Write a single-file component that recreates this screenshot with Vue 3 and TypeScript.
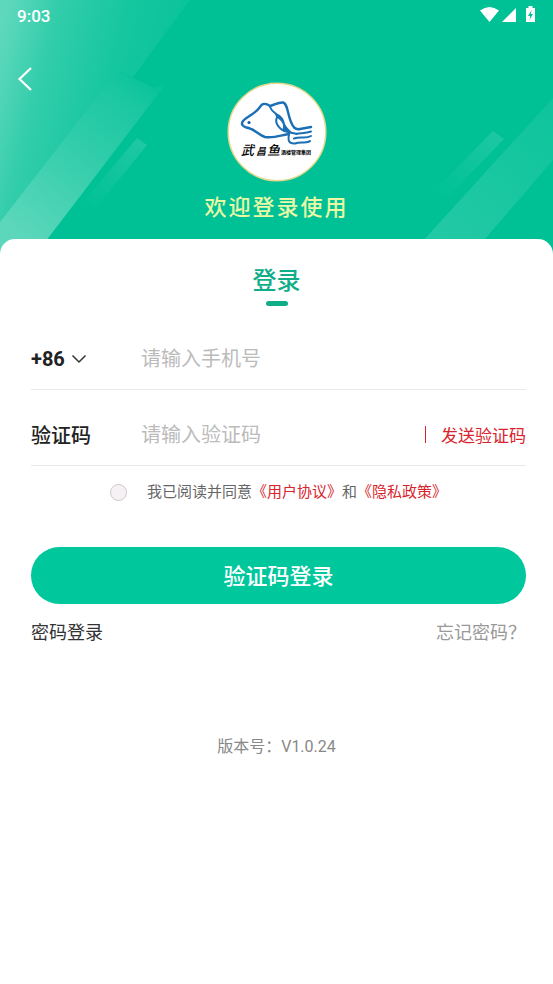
<script setup lang="ts">
import { ref } from 'vue'

const phone = ref('')
const code = ref('')
const agreed = ref(false)
</script>

<template>
  <main class="page">
    <header class="hero">
      <svg class="hero-art" viewBox="0 0 553 254" preserveAspectRatio="none" aria-hidden="true">
        <defs>
          <linearGradient id="glow" gradientUnits="userSpaceOnUse" x1="-10" y1="80" x2="175" y2="125">
            <stop offset="0" stop-color="#fff" stop-opacity=".37" />
            <stop offset=".25" stop-color="#fff" stop-opacity=".2" />
            <stop offset=".6" stop-color="#fff" stop-opacity=".09" />
            <stop offset="1" stop-color="#fff" stop-opacity=".03" />
          </linearGradient>
          <linearGradient id="beam" gradientUnits="userSpaceOnUse" x1="20" y1="235" x2="150" y2="78">
            <stop offset="0" stop-color="#fff" stop-opacity=".36" />
            <stop offset=".5" stop-color="#fff" stop-opacity=".2" />
            <stop offset=".85" stop-color="#fff" stop-opacity=".1" />
            <stop offset="1" stop-color="#fff" stop-opacity=".03" />
          </linearGradient>
          <linearGradient id="chip-left" gradientUnits="userSpaceOnUse" x1="142" y1="141" x2="88" y2="208">
            <stop offset="0" stop-color="#fff" stop-opacity=".12" />
            <stop offset="1" stop-color="#fff" stop-opacity="0" />
          </linearGradient>
          <linearGradient id="chip-right" gradientUnits="userSpaceOnUse" x1="498" y1="135" x2="440" y2="195">
            <stop offset="0" stop-color="#fff" stop-opacity=".11" />
            <stop offset="1" stop-color="#fff" stop-opacity="0" />
          </linearGradient>
          <linearGradient id="ribbon" gradientUnits="userSpaceOnUse" x1="450" y1="240" x2="560" y2="120">
            <stop offset="0" stop-color="#fff" stop-opacity=".13" />
            <stop offset="1" stop-color="#fff" stop-opacity=".06" />
          </linearGradient>
        </defs>
        <path d="M0 0H190L133 77 118 70 0 222Z" fill="url(#glow)" />
        <path d="M118 70 153 88 165 85 36 254H0V222Z" fill="url(#beam)" />
        <path d="M137 138 147 145 95 209 83 202Z" fill="url(#chip-left)" />
        <path d="M493 131 504 139 446 199 436 189Z" fill="url(#chip-right)" />
        <path d="M553 98V160L472 254H411Z" fill="url(#ribbon)" />
      </svg>

      <div class="status">
        <span>9:03</span>
        <svg class="status-icons" width="56" height="18" viewBox="0 0 56 18" fill="#fff" aria-hidden="true">
          <path d="M0 4.600Q9.500-2.600 19 4.600L9.500 16Z" />
          <path d="M22 16 36 2V16Z" />
          <path fill-rule="evenodd" d="M48.500 0H52.500V2H55V16H46V2H48.500ZM51.500 4 48 10H50.200L49.500 14 53 8H50.800Z" />
        </svg>
      </div>

      <div class="brand">
        <button class="back" type="button" aria-label="返回">
          <svg width="16" height="26" viewBox="0 0 16 26" fill="none" stroke="#fff" stroke-width="2.200">
            <path d="M14 2 2.500 13 14 24" />
          </svg>
        </button>
        <svg class="logo" width="100" height="100" viewBox="0 0 100 100">
          <circle cx="50" cy="50" r="48.800" fill="#fff" stroke="#e3d98c" stroke-width="1.500" />
          <g fill="none" stroke="#1b6fb5" stroke-linecap="round" stroke-linejoin="round">
            <path stroke-width="2.400" d="M43 24C39 21 35 21 33 25 28 32 21 34 16 39 14 42 15 44 19 45.500 27 46 31 53 38 55 46 56.500 55 53 62 52M43 24C48 23 51 20 56 20.500 61 22 60 31 64 40 66 45 68 48 73 47L84 45" />
            <path stroke-width="2" d="M43 25C45 30 49 31 51 34 47 39 50 45 57 49L70 52M69 52C74 51 79 51.500 84 49.500M67 56.500C73 54 79 57 84 54M62 52C61 58 61 62 68 61.500 74 59 80 62 83 59" />
          </g>
          <path fill="#1b6fb5" d="M48 31C55 33 57 37 58 42 60 46 63 48 66 52L55 48C58 43 55 39 49 35Z" />
          <circle cx="22" cy="40.500" r="1.600" fill="#1b5f9f" />
          <text class="logo-name" y="73"><tspan x="14">武</tspan><tspan class="logo-small" x="29">昌</tspan><tspan x="40">鱼</tspan></text>
          <text class="logo-note" x="54" y="72">酒楼管理集团</text>
        </svg>
      </div>
      <p class="welcome">欢迎登录使用</p>
    </header>

    <section class="card">
      <h1 class="title">登录</h1>

      <form class="form" @submit.prevent>
        <div class="field">
          <button class="area" type="button" aria-label="国家区号 +86">
            +86
            <svg width="16" height="10" viewBox="0 0 16 10" fill="none" stroke="#333" stroke-width="1.500">
              <path d="M1.500 1.500 8 8 14.500 1.500" />
            </svg>
          </button>
          <input v-model="phone" class="entry" type="tel" aria-label="手机号" placeholder="请输入手机号" />
        </div>
        <div class="field">
          <label class="name" for="code">验证码</label>
          <input id="code" v-model="code" class="entry" type="text" inputmode="numeric" placeholder="请输入验证码" />
          <button class="send" type="button">发送验证码</button>
        </div>

        <div class="consent">
          <input id="agree" v-model="agreed" class="tick" type="checkbox" />
          <p class="terms">
            <label for="agree">我已阅读并同意</label><a href="#agreement">《用户协议》</a>和<a href="#privacy">《隐私政策》</a>
          </p>
        </div>

        <button class="submit" type="submit">验证码登录</button>
      </form>

      <nav class="links">
        <a href="#password">密码登录</a>
        <a class="forgot" href="#forgot">忘记密码？</a>
      </nav>

      <p class="version">版本号：V1.0.24</p>
    </section>
  </main>
</template>

<style>
body {
  margin: 0;
  background: #fff;
}
</style>

<style scoped>
.page {
  font-family: Roboto, "Noto Sans CJK SC", sans-serif;
  color: #222;
}
.page * {
  box-sizing: border-box;
}
button,
input {
  padding: 0;
  border: 0;
  background: none;
  color: inherit;
  font: inherit;
}
a {
  color: inherit;
  text-decoration: none;
}
p,
h1 {
  margin: 0;
}
.hero {
  position: relative;
  padding-bottom: 31px;
  background: #00c196;
}
.hero-art {
  position: absolute;
  inset: 0;
  width: 100%;
  height: 100%;
}
.status,
.brand,
.welcome {
  position: relative;
}
.status {
  display: flex;
  align-items: center;
  justify-content: space-between;
  height: 32px;
  padding: 0 17px;
  color: #fff;
  font-size: 17px;
  font-weight: 500;
}
.status-icons {
  margin-bottom: 2px;
}
.brand {
  display: grid;
  grid-template-columns: 1fr auto 1fr;
  align-items: start;
  padding: 34px 17px 0;
}
.back {
  display: flex;
  width: 20px;
  cursor: pointer;
}
.logo {
  display: block;
  margin-top: 16px;
}
.logo-name {
  font: italic 500 13px "Noto Sans CJK SC", sans-serif;
}
.logo-small {
  font-size: 10px;
}
.logo-note {
  font: 700 5px "Noto Sans CJK SC", sans-serif;
}
.welcome {
  margin-top: 11px;
  color: #e9f9a5;
  font-size: 22px;
  font-weight: 500;
  line-height: 30px;
  letter-spacing: 2px;
  text-align: center;
}
.card {
  position: relative;
  margin-top: -15px;
  padding: 25px 0 24px;
  border-radius: 15px 15px 0 0;
  background: #fff;
}
.title {
  display: flex;
  flex-direction: column;
  align-items: center;
  gap: 3px;
  color: #0fae88;
  font-size: 24px;
  font-weight: 500;
  line-height: 34px;
}
.title::after {
  width: 22px;
  height: 5px;
  border-radius: 3px;
  background: currentColor;
  content: "";
}
.form,
.links {
  padding: 0 27px 0 31px;
}
.form {
  margin-top: 22px;
}
.field {
  display: flex;
  align-items: center;
  height: 62px;
  margin-bottom: 14px;
  border-bottom: 1px solid #e8e8e8;
  font-size: 20px;
}
.area,
.name {
  flex: 0 0 110px;
  font-weight: 700;
}
.area {
  display: flex;
  align-items: center;
  gap: 6px;
}
.name {
  font-weight: 500;
}
.entry {
  flex: 1;
  min-width: 0;
  height: 40px;
  outline: none;
}
.entry::placeholder {
  color: #bbb;
  opacity: 1;
}
.send {
  display: flex;
  align-items: center;
  gap: 15px;
  color: #d8242c;
  font-size: 17px;
}
.send::before {
  width: 1px;
  height: 17px;
  background: #d8242c;
  content: "";
}
.consent {
  display: flex;
  align-items: center;
  justify-content: center;
  gap: 20px;
  font-size: 15px;
  line-height: 24px;
}
.tick {
  width: 17px;
  height: 17px;
  margin: 0;
  border: 1px solid #ccc8cb;
  border-radius: 50%;
  background: #f5f1f4;
  appearance: none;
}
.tick:checked {
  background: #00c79c;
}
.terms {
  color: #666;
}
.terms a {
  color: #d8242c;
}
.submit {
  display: block;
  width: 100%;
  height: 57px;
  margin-top: 43px;
  padding-bottom: 4px;
  border-radius: 29px;
  background: #00c79c;
  color: #fff;
  font-size: 22px;
  font-weight: 500;
}
.links {
  display: flex;
  justify-content: space-between;
  margin-top: 15px;
  color: #333;
  font-size: 18px;
  line-height: 28px;
}
.forgot {
  color: #999;
}
.version {
  margin-top: 88px;
  color: #888;
  font-size: 16px;
  line-height: 24px;
  text-align: center;
}
</style>
